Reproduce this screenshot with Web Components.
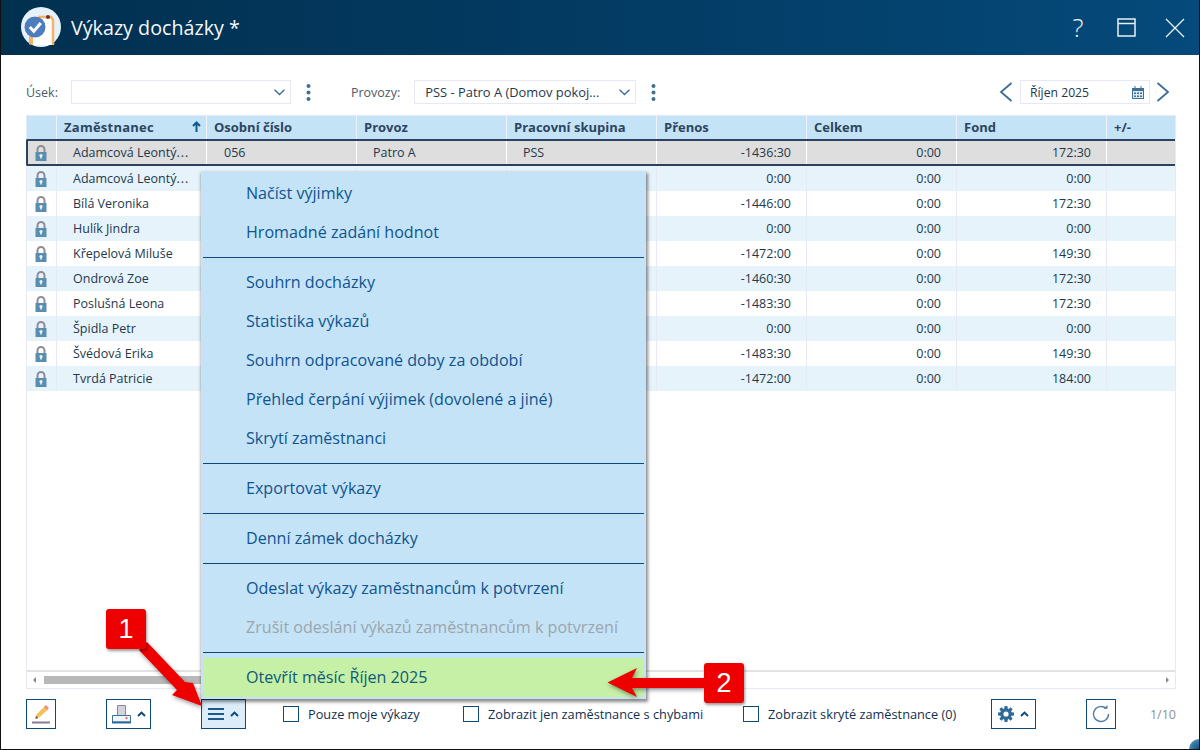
<!DOCTYPE html>
<html lang="cs">
<head>
<meta charset="utf-8">
<title>Výkazy docházky</title>
<style>
    html, body { margin: 0; padding: 0; background: #fff; }
    body { font-family: "Open Sans", "Liberation Sans", sans-serif; width: 1200px; height: 750px; overflow: hidden; }
</style>
</head>
<body>
<app-window>
    <title-bar slot="title" heading="Výkazy docházky *"></title-bar>
    <filter-bar slot="filters"></filter-bar>
    <data-table slot="table"></data-table>
    <bottom-toolbar slot="toolbar"></bottom-toolbar>
    <popup-menu slot="overlay"></popup-menu>
    <call-outs slot="overlay"></call-outs>
</app-window>

<script>
const chevronUp = `<svg width="9" height="6" viewBox="0 0 9 6"><path d="M1 5 4.500 1.600 8 5" fill="none" stroke="#0d4a7c" stroke-width="2"/></svg>`;

class AppWindow extends HTMLElement {
    constructor() {
        super();
        this._shadowRoot = this.attachShadow({mode: "open"});
    }
    connectedCallback() {
        this._shadowRoot.innerHTML = `
            <style>
                :host {
                    display: flex;
                    flex-direction: column;
                    position: relative;
                    box-sizing: border-box;
                    width: 1200px;
                    height: 750px;
                    border: solid #111;
                    border-width: 0 1px 1px 1px;
                    background: #fff;
                    overflow: hidden;
                }
                .body {
                    display: flex;
                    flex-direction: column;
                    padding: 25px 23px 0 25px;
                }
                .grip {
                    position: absolute;
                    right: 0;
                    bottom: 0;
                    width: 10px;
                    height: 10px;
                    border-radius: 100% 0 0 0;
                    background: radial-gradient(circle at 100% 100%, #0f4f80 0%, #3f7fa8 60%, #a9cde2 100%);
                }
            </style>
            <slot name="title"></slot>
            <div class="body">
                <slot name="filters"></slot>
                <slot name="table"></slot>
                <slot name="toolbar"></slot>
            </div>
            <div class="grip"></div>
            <slot name="overlay"></slot>
        `;
    }
}

class TitleBar extends HTMLElement {
    constructor() {
        super();
        this._shadowRoot = this.attachShadow({mode: "open"});
    }
    connectedCallback() {
        this._shadowRoot.innerHTML = `
            <style>
                :host {
                    display: flex;
                    align-items: center;
                    flex: none;
                    height: 55px;
                    margin: 0 -1px;
                    padding: 0 15px 0 21px;
                    box-sizing: border-box;
                    background: linear-gradient(90deg, #02304f 0%, #033b63 50%, #054a7b 100%);
                    color: #fff;
                }
                .logo { width: 40px; height: 40px; flex: none; margin-top: -1px; }
                h1 {
                    margin: 0 0 1px 10px;
                    flex: 1;
                    font: 400 19.700px "Open Sans", sans-serif;
                    color: #f4f8fb;
                }
                .help {
                    font: 300 26px "Open Sans", sans-serif;
                    width: 20px;
                    text-align: center;
                    margin-right: 29px;
                    margin-left: 1px;
                    margin-bottom: 1px;
                    color: #e8eff5;
                }
                svg.win { display: block; flex: none; }
            </style>
            <svg class="logo" viewBox="0 0 40 40">
                <circle cx="20" cy="20" r="20" fill="#e6f1fa"/>
                <path d="M8 27H12V37.500H8Z" fill="#f6b368"/>
                <path d="M12 9H31V38H12Z" fill="#fff"/>
                <path d="M17 10H30L32 13V38" fill="none" stroke="#f6b368" stroke-width="2.500"/>
                <circle cx="27" cy="10" r="2" fill="#70332c"/>
                <circle cx="14" cy="20" r="10.500" fill="#4e7dbd"/>
                <path d="M8.800 20 12.800 24.300 19.800 16" fill="none" stroke="#fff" stroke-width="3"/>
            </svg>
            <h1>${this.getAttribute("heading")}</h1>
            <div class="help">?</div>
            <svg class="win" width="19" height="19" viewBox="0 0 19 19" style="margin-right:29px">
                <path d="M1 1H18V18H1ZM1 5.500H18" fill="none" stroke="#e8eff5" stroke-width="1.500"/>
            </svg>
            <svg class="win" width="20" height="20" viewBox="0 0 20 20">
                <path d="M1 1 19 19M19 1 1 19" fill="none" stroke="#e8eff5" stroke-width="1.300"/>
            </svg>
        `;
    }
}

class SelectBox extends HTMLElement {
    constructor() {
        super();
        this._shadowRoot = this.attachShadow({mode: "open"});
    }
    connectedCallback() {
        const calendar = this.hasAttribute("calendar");
        const icon = calendar
            ? `<svg width="12" height="13" viewBox="0 0 12 13"><path d="M0 2H12V13H0Z" fill="#3f7097"/><path d="M1 5H11V12H1Z" fill="#dfe9f1"/><path d="M2 6.500H4V8H2ZM5 6.500H7V8H5ZM8 6.500H10V8H8ZM2 9.500H4V11H2ZM5 9.500H7V11H5ZM8 9.500H10V11H8ZM2.500 0H3.500V2H2.500ZM8.500 0H9.500V2H8.500Z" fill="#3f7097"/></svg>`
            : `<svg width="11" height="7" viewBox="0 0 11 7"><path d="M.5 .8 5.500 5.500 10.500 .8" fill="none" stroke="#3d6d96" stroke-width="1.400"/></svg>`;
        this._shadowRoot.innerHTML = `
            <style>
                :host {
                    display: flex;
                    align-items: center;
                    justify-content: space-between;
                    box-sizing: border-box;
                    height: 24px;
                    padding: 0 5px 0 10px;
                    border: solid 1px #e4e9f5;
                    background: #fff;
                    font-size: 12.200px;
                    color: #24384c;
                    white-space: nowrap;
                }
                :host([calendar]) { padding-left: 9px; }
            </style>
            <span><slot></slot></span>
            ${icon}
        `;
    }
}

class FilterBar extends HTMLElement {
    constructor() {
        super();
        this._shadowRoot = this.attachShadow({mode: "open"});
    }
    connectedCallback() {
        const kebab = `<svg class="kebab" width="5" height="17" viewBox="0 0 5 17"><circle cx="2.500" cy="2" r="2" fill="#3f7097"/><circle cx="2.500" cy="8.500" r="2" fill="#3f7097"/><circle cx="2.500" cy="15" r="2" fill="#3f7097"/></svg>`;
        this._shadowRoot.innerHTML = `
            <style>
                :host {
                    display: flex;
                    align-items: center;
                    height: 24px;
                    flex: none;
                    font-size: 12.500px;
                    color: #4b5b6a;
                }
                .usek { width: 220px; margin-left: 13px; }
                .provoz { width: 222px; margin-left: 14px; font-size: 12.900px; }
                .kebab { margin-left: 15px; flex: none; }
                .lbl2 { margin-left: 40px; }
                .date { width: 130px; margin: 0 6px 0 7px; }
                .nav { flex: none; display: block; }
                .right { margin-left: auto; display: flex; align-items: center; margin-right: 6px; }
            </style>
            <span>Úsek:</span>
            <select-box class="usek"></select-box>
            ${kebab}
            <span class="lbl2">Provozy:</span>
            <select-box class="provoz" style="font-size:12.900px">PSS - Patro A (Domov pokoj...</select-box>
            ${kebab}
            <div class="right">
                <svg class="nav" width="14" height="20" viewBox="0 0 14 20"><path d="M12.500 1 2 10 12.500 19" fill="none" stroke="#3d6d96" stroke-width="1.800"/></svg>
                <select-box class="date" calendar>Říjen 2025</select-box>
                <svg class="nav" width="14" height="20" viewBox="0 0 14 20"><path d="M1.500 1 12 10 1.500 19" fill="none" stroke="#3d6d96" stroke-width="1.800"/></svg>
            </div>
        `;
    }
}

const rows = [
    ["Adamcová Leontý<i>...</i>", "056", "Patro A", "PSS", "-1436:30", "0:00", "172:30"],
    ["Adamcová Leontý<i>...</i>", "", "", "", "0:00", "0:00", "0:00"],
    ["Bílá Veronika", "", "", "", "-1446:00", "0:00", "172:30"],
    ["Hulík Jindra", "", "", "", "0:00", "0:00", "0:00"],
    ["Křepelová Miluše", "", "", "", "-1472:00", "0:00", "149:30"],
    ["Ondrová Zoe", "", "", "", "-1460:30", "0:00", "172:30"],
    ["Poslušná Leona", "", "", "", "-1483:30", "0:00", "172:30"],
    ["Špidla Petr", "", "", "", "0:00", "0:00", "0:00"],
    ["Švédová Erika", "", "", "", "-1483:30", "0:00", "149:30"],
    ["Tvrdá Patricie", "", "", "", "-1472:00", "0:00", "184:00"],
];
const headers = ["Zaměstnanec", "Osobní číslo", "Provoz", "Pracovní skupina", "Přenos", "Celkem", "Fond", "+/-"];
const lockIcon = `<svg width="12" height="16" viewBox="0 0 12 16"><path d="M2.500 8V4.500A3.500 3.500 0 0 1 9.500 4.500V8" fill="none" stroke="#8f8b98" stroke-width="2"/><path d="M.5 7H11.500V16H.5Z" fill="#5a8eb0"/><circle cx="6" cy="10.500" r="1.600" fill="#eaf3f9"/><path d="M5.200 11H6.800V13.500H5.200Z" fill="#eaf3f9"/></svg>`;

class DataTable extends HTMLElement {
    constructor() {
        super();
        this._shadowRoot = this.attachShadow({mode: "open"});
    }
    connectedCallback() {
        const cells = (r) => `
            <div class="c ic">${lockIcon}</div>
            <div class="c"><span>${r[0]}</span></div><div class="c">${r[1]}</div><div class="c">${r[2]}</div><div class="c">${r[3]}</div>
            <div class="c n">${r[4]}</div><div class="c n">${r[5]}</div><div class="c n">${r[6]}</div><div class="c"></div>`;
        this._shadowRoot.innerHTML = `
            <style>
                :host {
                    display: flex;
                    flex-direction: column;
                    flex: none;
                    box-sizing: border-box;
                    height: 574px;
                    margin-top: 11px;
                    border: solid 1px #e6eaf6;
                    font-size: 12.500px;
                    color: #24384c;
                }
                i { font-style: normal; letter-spacing: 1px; }
                .list { flex: 1; min-height: 0; }
                .r {
                    display: grid;
                    grid-template-columns: 29px repeat(7, 150px) 1fr;
                    height: 25px;
                }
                .c {
                    display: flex;
                    align-items: center;
                    box-sizing: border-box;
                    padding-left: 16px;
                    border-left: solid 1px #e6eaf6;
                    white-space: nowrap;
                    overflow: hidden;
                }
                .c.ic { padding: 0 2px 0 0; justify-content: center; border-left: none; }
                .c.n { justify-content: flex-end; padding: 0 15px 0 0; }
                .r.alt { background: #e6f3fb; }
                .h {
                    height: 23px;
                    background: #c5e3f6;
                }
                .h .c {
                    padding-left: 7px;
                    padding-bottom: 2px;
                    border-left-color: #eef4fb;
                    font-weight: 700;
                    font-size: 13px;
                    color: #2c4560;
                    justify-content: space-between;
                }
                .h .c:nth-child(2) span { letter-spacing: .25px; }
                .h svg { margin-right: 5px; }
                .sel {
                    height: 27px;
                    background: #dedede;
                    border: solid #2a4260;
                    border-width: 2px 0;
                    border-left-width: 2px;
                    border-radius: 2px 0 0 2px;
                    box-sizing: border-box;
                    margin-left: -1px;
                    grid-template-columns: 28px repeat(7, 150px) 1fr;
                }
                .sel .c { border-left-color: #fff; }
                .sel .c:nth-child(3) { padding-left: 17px; }
                .scroll {
                    position: relative;
                    flex: none;
                    height: 16px;
                    border-top: solid 2px #e2e2e2;
                }
                .thumb { position: absolute; left: 17px; top: 4px; width: 420px; height: 8px; background: #b8b8b8; }
                .arr { position: absolute; top: 5px; width: 0; height: 0; border: solid 3px transparent; }
                .arr.l { left: 6px; border-right-color: #8a8a8a; border-left-width: 0; }
                .arr.r2 { right: 6px; border-left-color: #8a8a8a; border-right-width: 0; }
            </style>
            <div class="r h">
                <div class="c ic"></div>
                ${headers.map((h, i) => `<div class="c"><span>${h}</span>${i === 0 ? `<svg width="9" height="11" viewBox="0 0 9 11"><path d="M4.500 11V1.500M1 5 4.500 1.500 8 5" fill="none" stroke="#0d5a94" stroke-width="2"/></svg>` : ""}</div>`).join("")}
            </div>
            <div class="list">
                ${rows.map((r, i) => `<div class="r ${i === 0 ? "sel" : (i % 2 ? "alt" : "")}">${cells(r)}</div>`).join("")}
            </div>
            <div class="scroll">
                <div class="arr l"></div>
                <div class="thumb"></div>
                <div class="arr r2"></div>
            </div>
        `;
    }
}

class ToolButton extends HTMLElement {
    constructor() {
        super();
        this._shadowRoot = this.attachShadow({mode: "open"});
    }
    connectedCallback() {
        this._shadowRoot.innerHTML = `
            <style>
                :host {
                    display: flex;
                    align-items: center;
                    justify-content: center;
                    flex: none;
                    box-sizing: border-box;
                    width: 30px;
                    height: 30px;
                    border: solid 1px #0d4a7c;
                    background: #fff;
                    gap: 6px;
                }
                :host([wide]) { width: 45px; }
                :host([active]) { background: #dcedf9; }
                ::slotted(svg) { display: block; flex: none; }
            </style>
            <slot></slot>
        `;
    }
}

class CheckField extends HTMLElement {
    constructor() {
        super();
        this._shadowRoot = this.attachShadow({mode: "open"});
    }
    connectedCallback() {
        this._shadowRoot.innerHTML = `
            <style>
                :host {
                    display: flex;
                    align-items: center;
                    flex: none;
                    gap: 9px;
                    font-size: 12.750px;
                    color: #12304e;
                    white-space: nowrap;
                }
                .box {
                    width: 16px;
                    height: 16px;
                    box-sizing: border-box;
                    border: solid 1px #0d4a7c;
                    flex: none;
                }
            </style>
            <div class="box"></div>
            <slot></slot>
        `;
    }
}

class BottomToolbar extends HTMLElement {
    constructor() {
        super();
        this._shadowRoot = this.attachShadow({mode: "open"});
    }
    connectedCallback() {
        const teeth = [0, 45, 90, 135, 180, 225, 270, 315]
            .map((a) => `<path d="M6.600 0H9.400L9.800 3H6.200Z" transform="rotate(${a} 8 8)"/>`).join("");
        this._shadowRoot.innerHTML = `
            <style>
                :host {
                    display: flex;
                    align-items: center;
                    flex: none;
                    height: 30px;
                    margin-top: 10px;
                }
                .gap50 { margin-left: 50px; }
                .c1 { margin-left: 37px; width: 180px; }
                .c2 { width: 280px; }
                .c3 { width: 248px; }
                .page { margin-left: auto; font-size: 12.500px; color: #87929c; }
            </style>
            <tool-button>
                <svg width="20" height="20" viewBox="0 0 20 20">
                    <path d="M1 17.500H19V19.500H1Z" fill="#8a7d94"/>
                    <path d="M4.500 14 5.800 10 13.500 2.500 16.800 5.800 8.800 13Z" fill="#f4c15c"/>
                    <path d="M13 3 15 1 18 4 16.300 6Z" fill="#ee8d80"/>
                    <path d="M4.300 15 5 11.700 7.500 13.900Z" fill="#7a5a3a"/>
                </svg>
            </tool-button>
            <tool-button class="gap50" wide>
                <svg width="19" height="19" viewBox="0 0 19 19">
                    <path d="M5.500 .5H13.500V10.500H5.500Z" fill="#d4d2da" stroke="#8a8795"/>
                    <path d="M.5 10.500H18.500V17H.5Z" fill="#f2f6fa" stroke="#3f7097"/>
                    <path d="M0 16.500H19V18.500H0Z" fill="#2f6a98"/>
                    <circle cx="14.500" cy="13" r="1.200" fill="#ee6f7a"/>
                </svg>
                ${chevronUp}
            </tool-button>
            <tool-button class="gap50" wide active>
                <svg width="16" height="12" viewBox="0 0 16 12"><path d="M0 1H16M0 6H16M0 11H16" stroke="#1d5a8a" stroke-width="1.800"/></svg>
                ${chevronUp}
            </tool-button>
            <check-field class="c1">Pouze moje výkazy</check-field>
            <check-field class="c2">Zobrazit jen zaměstnance s chybami</check-field>
            <check-field class="c3">Zobrazit skryté zaměstnance (0)</check-field>
            <tool-button wide>
                <svg width="16" height="16" viewBox="0 0 16 16">
                    <g fill="#2f6a98">${teeth}</g>
                    <circle cx="8" cy="8" r="4.200" fill="none" stroke="#2f6a98" stroke-width="3.200"/>
                </svg>
                ${chevronUp}
            </tool-button>
            <tool-button class="gap50">
                <svg width="18" height="18" viewBox="0 0 18 18">
                    <path d="M14.200 3.600A7.500 7.500 0 1 0 16.500 9" fill="none" stroke="#4f7fa5" stroke-width="1.400"/>
                    <path d="M11.500 3.800H15.500V0Z" fill="#4f7fa5"/>
                </svg>
            </tool-button>
            <span class="page">1/10</span>
        `;
    }
}

const menuItems = [
    "Načíst výjimky", "Hromadné zadání hodnot", "-",
    "Souhrn docházky", "Statistika výkazů", "Souhrn odpracované doby za období", "Přehled čerpání výjimek (dovolené a jiné)", "Skrytí zaměstnanci", "-",
    "Exportovat výkazy", "-",
    "Denní zámek docházky", "-",
    "Odeslat výkazy zaměstnancům k potvrzení", "!Zrušit odeslání výkazů zaměstnancům k potvrzení", "-",
    "+Otevřít měsíc Říjen 2025",
];

class PopupMenu extends HTMLElement {
    constructor() {
        super();
        this._shadowRoot = this.attachShadow({mode: "open"});
    }
    connectedCallback() {
        const item = (t) => {
            if (t === "-") return `<div class="sep"></div>`;
            if (t[0] === "!") return `<div class="it off">${t.slice(1)}</div>`;
            if (t[0] === "+") return `<div class="it go">${t.slice(1)}</div>`;
            return `<div class="it">${t}</div>`;
        };
        this._shadowRoot.innerHTML = `
            <style>
                :host {
                    position: absolute;
                    left: 200px;
                    top: 172px;
                    width: 445px;
                    box-sizing: border-box;
                    padding: 2px;
                    background: #c5e3f6;
                    box-shadow: 1px 2px 3px 1px rgba(0, 0, 0, .45);
                    font-size: 16.100px;
                    color: #0f5490;
                }
                .it {
                    display: flex;
                    align-items: center;
                    box-sizing: border-box;
                    height: 39px;
                    padding: 0 0 2px 43px;
                    white-space: nowrap;
                }
                .off { color: #9aa6ae; }
                .go { background: #c6f0a6; color: #0f5a78; }
                .sep { height: 11px; display: flex; align-items: center; }
                .sep::before { content: ""; flex: 1; height: 1px; background: #0d4a7c; }
            </style>
            ${menuItems.map(item).join("")}
        `;
    }
}

class CallOuts extends HTMLElement {
    constructor() {
        super();
        this._shadowRoot = this.attachShadow({mode: "open"});
    }
    connectedCallback() {
        this._shadowRoot.innerHTML = `
            <style>
                :host { position: absolute; left: -1px; top: 0; width: 1200px; height: 750px; pointer-events: none; }
                svg { position: absolute; left: 0; top: 0; filter: drop-shadow(1px 2px 2px rgba(0, 0, 0, .4)); }
                .num {
                    position: absolute;
                    display: flex;
                    align-items: center;
                    justify-content: center;
                    width: 40px;
                    height: 40px;
                    border-radius: 3px;
                    background: #ee0000;
                    color: #fff;
                    font: 400 27px "Liberation Sans", Arial, sans-serif;
                    box-shadow: 1px 2px 3px rgba(0, 0, 0, .4);
                }
            </style>
            <svg width="1200" height="750" viewBox="0 0 1200 750">
                <path d="M139 650 147 642 185 682 193 683 202 706 172 695 177 690Z" fill="#ee0000"/>
                <path d="M704 678H632L637 668 607.500 682.500 637 697 632 688H704Z" fill="#ee0000"/>
            </svg>
            <div class="num" style="left:106px;top:609px">1</div>
            <div class="num" style="left:704px;top:663px">2</div>
        `;
    }
}

customElements.define('app-window', AppWindow);
customElements.define('title-bar', TitleBar);
customElements.define('select-box', SelectBox);
customElements.define('filter-bar', FilterBar);
customElements.define('data-table', DataTable);
customElements.define('tool-button', ToolButton);
customElements.define('check-field', CheckField);
customElements.define('bottom-toolbar', BottomToolbar);
customElements.define('popup-menu', PopupMenu);
customElements.define('call-outs', CallOuts);
</script>
</body>
</html>
